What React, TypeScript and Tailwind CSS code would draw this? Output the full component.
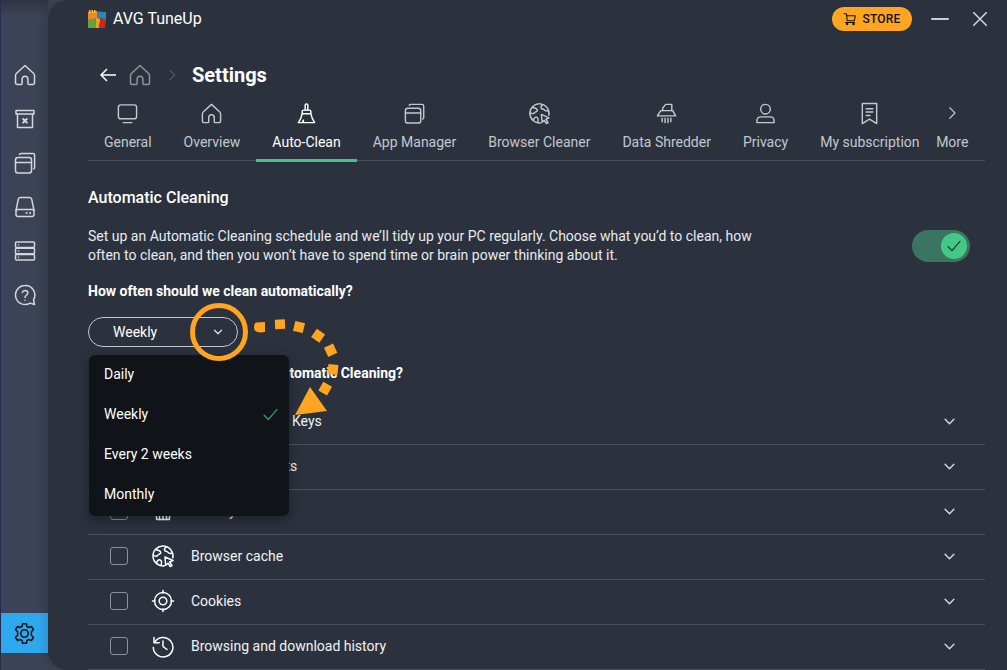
import React from "react";

type P = { className?: string };
const S = ({ className, children, sw = 1.5 }: P & { children: React.ReactNode; sw?: number }) => (
  <svg viewBox="0 0 24 24" fill="none" stroke="currentColor" strokeWidth={sw} strokeLinecap="round" strokeLinejoin="round" className={className}>
    {children}
  </svg>
);

const Home = ({ className }: P) => (
  <S className={className}>
    <path d="M12 2.500 3.600 10.200c-.9.8-1.100 1.300-1.100 2.300v7c0 1.200.8 2 2 2h3.700c.6 0 .9-.3.9-.9v-4.400c0-1.700 1.200-2.900 2.900-2.900s2.900 1.200 2.900 2.900v4.400c0 .6.3.9.9.9h3.700c1.200 0 2-.8 2-2v-7c0-1-.2-1.500-1.100-2.300L12 2.500Z" />
  </S>
);
const Archive = ({ className }: P) => (
  <S className={className}>
    <path d="M3 3.500h18v3.500H3z" />
    <path d="M4.500 7v13.500h15V7" />
    <path d="m10.200 12 3.600 3.600M13.800 12l-3.600 3.600" strokeWidth={2} />
  </S>
);
const Windows = ({ className }: P) => (
  <S className={className}>
    <rect x="2.500" y="6.500" width="16" height="15.500" rx="2.500" />
    <path d="M2.500 11.500h16" />
    <path d="M6.500 3.500c.3-.7.9-1 1.600-1H20c1 0 1.600.6 1.600 1.600v12.200c0 .8-.3 1.300-1 1.600" />
  </S>
);
const Drive = ({ className }: P) => (
  <S className={className}>
    <path d="M3 15.500 5.200 4.600c.2-1.200 1-2 2.200-2h9.200c1.200 0 2 .8 2.200 2L21 15.500" />
    <rect x="3" y="14.500" width="18" height="7" rx="2" />
    <path d="M13.500 18h.1M17 18h.1" strokeWidth={2} />
  </S>
);
const Stack = ({ className }: P) => (
  <S className={className}>
    <rect x="2.500" y="3" width="19" height="5.600" rx="1" />
    <rect x="2.500" y="9.200" width="19" height="5.600" rx="1" />
    <rect x="2.500" y="15.400" width="19" height="5.600" rx="1" />
    <path d="M5.500 5.800h.1M5.500 12h.1M5.500 18.200h.1" />
  </S>
);
const Help = ({ className }: P) => (
  <S className={className}>
    <path d="M12 2.500a9.500 9.500 0 1 0 5 17.600l4.500 1.400-1-4.700A9.500 9.500 0 0 0 12 2.500Z" />
    <path d="M9.300 9.600A2.800 2.800 0 0 1 12 7.500c1.600 0 2.800 1.100 2.800 2.500 0 2.300-2.800 2.200-2.800 4.400" />
    <path d="M12 17.200h.01" />
  </S>
);
const Gear = ({ className }: P) => (
  <S className={className}>
    <circle cx="12" cy="12" r="3.600" />
    <path d="M10.200 2.600h3.600l.6 2.700 1.700.9 2.600-.9 1.900 3.100-2 1.900v3.400l2 1.900-1.900 3.100-2.600-.9-1.700.9-.6 2.700h-3.600l-.6-2.700-1.700-.9-2.600.9-1.900-3.100 2-1.900v-3.400l-2-1.900 1.900-3.100 2.600.9 1.700-.9.6-2.700Z" />
  </S>
);
const Monitor = ({ className }: P) => (
  <S className={className}>
    <rect x="2.500" y="3" width="19" height="14.500" rx="2.500" />
    <path d="M7.500 21.500h9" />
  </S>
);
const Broom = ({ className }: P) => (
  <S className={className}>
    <path d="M10.600 8.500V3.200c0-.8.5-1.200 1.400-1.200s1.400.4 1.400 1.200v5.300" />
    <path d="M7.500 12.200V9.800c0-.8.5-1.300 1.300-1.300h6.400c.8 0 1.300.5 1.300 1.300v2.400z" />
    <path d="M7.500 12.200C6.900 15.500 5.600 18.800 3.500 21.500h4.200c.4-.9.7-1.800.9-2.600.2 1 .3 1.800.3 2.600h11.600c-2-2.700-3.300-6-4-9.300" />
  </S>
);
const Globe = ({ className }: P) => (
  <S className={className}>
    <path d="M21.800 13.800A10 10 0 1 0 13.500 21.800" />
    <path d="M5 5.500c1.700 1 3.400.8 4.500 2.300.8 1.200-.3 2-1.600 2.600-1.500.7-1.600 2-3.300 1.700L2.500 11.500" />
    <path d="M15.500 2.800c-1.500 1-2.700 2.300-1.700 3.700.8 1.100 2.400.6 3.200 1.800.6 1 1.600 1.400 4 1" />
    <path d="M5.500 19c.6-1.800 1.400-3.300 3-3.200 1.400.1 2.300 1.400 2 3.200l-.4 2.500" />
    <path d="m14 13 8 3.500-3.400 1.500 2.400 3.500-1.800 1-2.200-3.300-2.300 2z" fill="#2b323e" />
  </S>
);
const Shredder = ({ className }: P) => (
  <S className={className}>
    <path d="M8 9V6.200L11.200 2.500h6.300V9" />
    <path d="M6 9h12.500l3 5.500H2.500z" />
    <path d="M7.500 17v3.500M10.500 17v4.500M13.500 17v4.500M16.500 17v3.500" />
  </S>
);
const User = ({ className }: P) => (
  <S className={className}>
    <circle cx="12" cy="7.500" r="5" />
    <path d="M3 21.500v-1.800c0-2.600 2-4.200 4.500-4.200h9c2.500 0 4.500 1.600 4.500 4.200v1.800z" />
  </S>
);
const Receipt = ({ className }: P) => (
  <S className={className}>
    <path d="M4.500 1.500h15v21L12 17.800l-7.500 4.700z" />
    <path d="M8.500 7h7M8.500 10.500h7M8.500 14h4" />
  </S>
);
const Chevron = ({ className }: P) => (
  <S className={className}>
    <path d="m9 5 7 7-7 7" />
  </S>
);
const Down = ({ className }: P) => (
  <S className={className} sw={2.400}>
    <path d="m5 8.500 7 7 7-7" />
  </S>
);
const Check = ({ className }: P) => (
  <S className={className} sw={1.800}>
    <path d="m3 13 6 6L21 5" />
  </S>
);
const Cart = ({ className }: P) => (
  <S className={className} sw={1.800}>
    <path d="M2 3h3.500l1 3.500M6.500 6.500H21l-1.500 8.500H7z" />
    <path d="M4 18h16" />
    <circle cx="7" cy="20.500" r="1.200" />
    <circle cx="18" cy="20.500" r="1.200" />
  </S>
);
const Target = ({ className }: P) => (
  <S className={className}>
    <circle cx="12" cy="12" r="8.500" />
    <circle cx="12" cy="12" r="3.800" />
    <path d="M12 1.500v2.500M12 20v2.500M1.500 12H4M20 12h2.500" />
  </S>
);
const History = ({ className }: P) => (
  <S className={className}>
    <path d="M3.500 8.500A9.800 9.800 0 1 1 2.300 13.500" />
    <path d="M3 3.500v5.200h5.200" />
    <path d="M12 7v5.500l4 3" />
  </S>
);
const Calendarish = ({ className }: P) => (
  <S className={className}>
    <rect x="5.500" y="6" width="13" height="14.500" rx="0.500" />
    <path d="M8 3v4M16 3v4M12 14v6.500M8.500 15v5.500M15.500 15v5.500" />
  </S>
);
const Blank = ({ className }: P) => (
  <S className={className}>
    <rect x="4" y="4" width="16" height="16" rx="2" />
  </S>
);

const Logo = () => (
  <svg viewBox="0 0 18 18" className="w-[18px] h-[18px]">
    <polygon points="0,2 9,1 9,9 0,10" fill="#ef8a2b" />
    <path d="M1 0h1.500v3H1zM3.500 0H5v3H3.500zM6 0h1.500v3H6z" fill="#f3c23a" />
    <polygon points="9,1.500 18,2 18,10 13,8 9,8" fill="#2f86b6" />
    <polygon points="0,10 8,8 7.500,18 0,18" fill="#63a53a" />
    <polygon points="8,8 12.500,8.500 11,18 7.500,18" fill="#e9a224" />
    <polygon points="12.500,8 18,10 17,18 11,18" fill="#c92a1c" />
  </svg>
);

const tabs: { label: string; Icon: React.FC<P>; active?: boolean }[] = [
  { label: "General", Icon: Monitor },
  { label: "Overview", Icon: Home },
  { label: "Auto-Clean", Icon: Broom, active: true },
  { label: "App Manager", Icon: Windows },
  { label: "Browser Cleaner", Icon: Globe },
  { label: "Data Shredder", Icon: Shredder },
  { label: "Privacy", Icon: User },
  { label: "My subscription", Icon: Receipt },
];

const rows: { label: string; Icon: React.FC<P> }[] = [
  { label: "Broken Registry Keys", Icon: Blank },
  { label: "Broken shortcuts", Icon: Blank },
  { label: "History", Icon: Calendarish },
  { label: "Browser cache", Icon: Globe },
  { label: "Cookies", Icon: Target },
  { label: "Browsing and download history", Icon: History },
];

const sideIcons = [Home, Archive, Windows, Drive, Stack, Help];

export default function App() {
  return (
    <div
      className="relative w-[1007px] h-[670px] overflow-hidden flex bg-[#3c4356] text-white"
      style={{ fontFamily: "Roboto, sans-serif" }}
    >
      <aside className="w-[48px] shrink-0 flex flex-col border-l border-[#272b4d] bg-[#3c4356]">
        <div className="h-[53px] shrink-0 bg-gradient-to-b from-[#2e3344] to-[#3c4356] to-30%" />
        <div className="flex flex-col">
          {sideIcons.map((I, i) => (
            <div key={i} className="h-[44px] flex items-center justify-center text-[#d3d6dc]">
              <I className="w-[24px] h-[24px]" />
            </div>
          ))}
        </div>
        <div className="flex-1" />
        <div className="h-[40px] mb-[17px] bg-[#2fa9ee] flex items-center justify-center text-[#10151c]">
          <Gear className="w-[25px] h-[25px]" />
        </div>
      </aside>

      <main className="flex-1 bg-[#2b323e] rounded-l-[20px] shadow-[-4px_0_8px_rgba(0,0,0,0.12)] flex flex-col pl-[40px] pr-[22px] overflow-hidden">
        <header className="h-[38px] shrink-0 flex items-center mr-[-2px]">
          <Logo />
          <span className="ml-[7px] text-[16px] text-white">AVG TuneUp</span>
          <div className="flex-1" />
          <div className="h-[24px] w-[80px] rounded-full bg-[#ffa51f] flex items-center justify-center gap-[5px] text-[#111] text-[12px] font-medium tracking-[0.2px]">
            <Cart className="w-[14px] h-[14px]" />
            STORE
          </div>
          <div className="ml-[19px] w-[18px] h-[2px] bg-[#c9ccd2] rounded" />
          <svg viewBox="0 0 14 14" className="ml-[24px] w-[14px] h-[14px]" stroke="#d3d6dc" strokeWidth="1.5" fill="none">
            <path d="m0 0 14 14M14 0 0 14" />
          </svg>
        </header>

        <div className="h-[50px] mt-[12px] shrink-0 flex items-center pl-[12px]">
          <svg viewBox="0 0 16 14" className="w-[16px] h-[14px]" stroke="#fff" strokeWidth="1.5" fill="none">
            <path d="M16 7H1M7 1 1 7l6 6" />
          </svg>
          <Home className="ml-[12px] w-[24px] h-[24px] text-[#8e9299]" />
          <Chevron className="ml-[12px] w-[16px] h-[16px] text-[#6b707a]" />
          <span className="ml-[12px] text-[20px] font-bold text-white">Settings</span>
        </div>

        <nav className="h-[61px] shrink-0 flex border-b border-[#4b505e] relative">
          {tabs.map(({ label, Icon, active }) => (
            <div
              key={label}
              className={"relative px-4 flex flex-col items-center " + (active ? "text-white" : "text-[#c3c7ce]")}
            >
              <Icon className="w-[23px] h-[23px] mt-[2px]" />
              <span className="mt-[8px] text-[14px] leading-[18px] whitespace-nowrap">{label}</span>
              {active && <div className="absolute left-0 right-0 bottom-[-2px] h-[3px] bg-[#43c487]" />}
            </div>
          ))}
          <div className="flex-1 flex flex-col items-center text-[#c3c7ce] pr-[16px]">
            <Chevron className="w-[18px] h-[18px] mt-[4px]" />
            <span className="mt-[11px] text-[14px] leading-[18px]">More</span>
          </div>
        </nav>

        <section className="flex-1 min-h-0 relative">
          <h2 className="mt-[27px] text-[16px] leading-[20px] font-medium text-white">Automatic Cleaning</h2>
          <div className="mt-[20px] flex items-start justify-between pr-[15px]">
            <p className="w-[680px] text-[14px] leading-[19px] text-[#e8eaed] mt-[-1px]">
              Set up an Automatic Cleaning schedule and we’ll tidy up your PC regularly. Choose what you’d to clean, how often to clean, and then you won’t have to spend time or brain power thinking about it.
            </p>
            <div className="relative w-[58px] h-[32px] rounded-full bg-[#3a7561] mt-[2px]">
              <div className="absolute right-[3px] top-[3px] w-[26px] h-[26px] rounded-full bg-[#43c985] flex items-center justify-center text-[#1f2e30]">
                <Check className="w-[16px] h-[16px]" />
              </div>
            </div>
          </div>

          <h3 className="mt-[17px] text-[14px] leading-[18px] font-bold text-white">How often should we clean automatically?</h3>

          <div className="mt-[17px] w-[150px] h-[30px] rounded-full border border-[#c3c7ce] flex items-center pl-[24px] pr-[13px] justify-between text-[14px]">
            <span>Weekly</span>
            <Down className="w-[12px] h-[12px] text-[#e3e5e9]" />
          </div>

          <h3 className="mt-[17px] w-[315px] text-right whitespace-nowrap text-[14px] leading-[18px] font-bold text-white">What should we clean in Automatic Cleaning?</h3>

          <div className="mt-[18px]">
            {rows.map(({ label, Icon }) => (
              <div key={label} className="h-[45px] flex items-center border-b border-[#4b505e] pl-[22px] pr-[28px] pb-[2px]">
                <div className="w-[18px] h-[18px] rounded-[3px] border border-[#8d9199]" />
                <Icon className="ml-[23px] w-[24px] h-[24px] text-white" />
                <span className="ml-[16px] text-[14px] text-[#f1f2f4]">{label}</span>
                <div className="flex-1" />
                <Down className="w-[15px] h-[15px] text-[#d3d6dc]" />
              </div>
            ))}
          </div>
        </section>
      </main>

      <div className="absolute left-[89px] top-[355px] w-[200px] h-[161px] rounded-[6px] bg-[#101318] shadow-[0_4px_12px_rgba(0,0,0,0.35)] flex flex-col text-[14px] text-white">
        {["Daily", "Weekly", "Every 2 weeks", "Monthly"].map((t) => (
          <div key={t} className="h-[40px] flex items-center justify-between pl-[15px] pr-[10px] pb-[2px]">
            <span>{t}</span>
            {t === "Weekly" && <Check className="w-[17px] h-[17px] text-[#25a566]" />}
          </div>
        ))}
      </div>

      <svg className="absolute left-0 top-0 pointer-events-none" width="1007" height="670" viewBox="0 0 1007 670">
        <circle cx="219" cy="332" r="26.500" fill="none" stroke="#ffa51f" strokeWidth="5" />
        <g fill="#ffa51f">
          <path d="M256 322.500 l9 -.5 v10 l-5 .5 q-6 -.5 -6 -5 q0 -4 2 -5z" />
          <rect x="275" y="319.500" width="10" height="9.500" transform="rotate(-2 280 324)" />
          <rect x="294" y="322" width="10" height="10" transform="rotate(14 299 327)" />
          <rect x="313.500" y="330.500" width="10" height="10" transform="rotate(35 318 335)" />
          <rect x="325.500" y="345.500" width="10" height="10" transform="rotate(-25 330 350)" />
          <rect x="328" y="364.500" width="10" height="10" transform="rotate(5 333 369)" />
          <rect x="320.500" y="383.500" width="10" height="10" transform="rotate(30 325 388)" />
          <polygon points="310,387 327,411 295,415" />
        </g>
      </svg>
    </div>
  );
}
